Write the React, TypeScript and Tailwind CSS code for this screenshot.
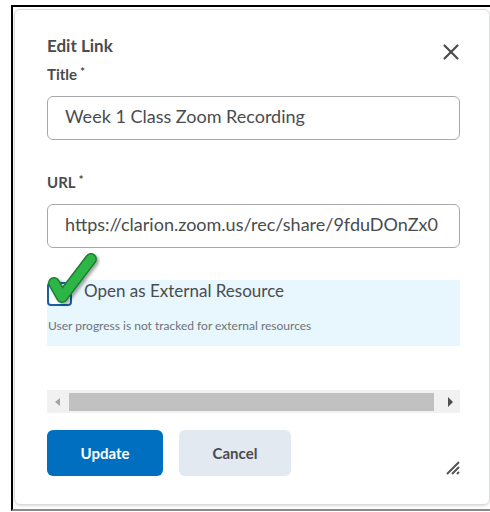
import { X } from 'lucide-react';

const font = { fontFamily: 'Lato, "Open Sans", sans-serif' };

// big green tick drawn over the checkbox
const GreenTick = () => (
  <svg
    className="pointer-events-none absolute left-[-3px] top-[-31px]"
    width="56"
    height="58"
    viewBox="0 0 56 58"
  >
    <defs>
      <filter id="tickShadow" x="-30%" y="-30%" width="160%" height="160%">
        <feDropShadow dx="2" dy="2" stdDeviation="1.5" floodColor="#000" floodOpacity="0.35" />
      </filter>
    </defs>
    <path
      d="M10 32 L18 46 L47 8"
      fill="none"
      stroke="#1b7f30"
      strokeWidth="12"
      strokeLinecap="round"
      strokeLinejoin="round"
      filter="url(#tickShadow)"
    />
    <path
      d="M10 32 L18 46 L47 8"
      fill="none"
      stroke="#2eb548"
      strokeWidth="9"
      strokeLinecap="round"
      strokeLinejoin="round"
    />
  </svg>
);

const Field = ({ label, value }: { label: string; value: string }) => (
  <div className="flex flex-col">
    <label className="text-[15px] font-bold leading-[18px] text-[#494c4e]">
      {label}
      <span className="ml-[3px] align-top text-[12px] leading-[14px]">*</span>
    </label>
    <div className="mt-[13px] flex h-[44px] items-center overflow-hidden rounded-[6px] border border-[#a5a9ab] bg-white pl-[17px] pb-[4px]">
      <span className="whitespace-nowrap text-[18px] text-[#494c4e]">{value}</span>
    </div>
  </div>
);

export default function App() {
  return (
    <div className="h-[512px] w-[490px] bg-white pl-[11px] pt-[5px]" style={font}>
      <div className="h-[506px] border-b-2 border-l-2 border-t-2 border-b-[#8a8a8a] border-l-black border-t-black pl-[1px] pt-[2px]">
        <div className="flex h-[496px] flex-col rounded-[6px] border border-[#d9dbdc] pl-[32px] pr-[29px] shadow-[0_1px_3px_rgba(0,0,0,0.15)]">
          <div className="flex h-[20px] items-start justify-between pt-0 mt-[26px]">
            <h2 className="text-[17px] font-bold leading-[20px] text-[#494c4e]">Edit Link</h2>
            <button className="-mr-[4px] mt-[3px] flex h-[26px] text-[#494c4e]">
              <X size={26} strokeWidth={2} />
            </button>
          </div>

          <div className="mt-[9px]">
            <Field label="Title" value="Week 1 Class Zoom Recording" />
          </div>
          <div className="mt-[33px]">
            <Field label="URL" value="https://clarion.zoom.us/rec/share/9fduDOnZx0" />
          </div>

          <div className="mt-[32px] h-[66px] bg-[#e8f6fe] pt-[2px]">
            <div className="relative flex items-start">
              <GreenTick />
              <span className="h-[24px] w-[25px] rounded-[4px] border-2 border-[#1a5fa3] bg-white" />
              <span className="-mt-[1px] ml-[12px] text-[17px] leading-[20px] text-[#494c4e]">
                Open as External Resource
              </span>
            </div>
            <p className="mt-[11px] pl-[1px] text-[12px] leading-[18px] text-[#6e7376]">
              User progress is not tracked for external resources
            </p>
          </div>

          {/* horizontal scroll bar */}
          <div className="mt-[44px] flex h-[23px] items-center bg-[#f1f1f1]">
            <span className="ml-[8px] h-0 w-0 border-y-[4px] border-r-[5px] border-y-transparent border-r-[#a3a3a3]" />
            <span className="ml-[9px] h-[18px] flex-1 bg-[#c1c1c1]" />
            <span className="ml-[14px] mr-[7px] h-0 w-0 border-y-[5px] border-l-[5px] border-y-transparent border-l-[#505050]" />
          </div>

          <div className="mt-[17px] flex items-end">
            <button className="h-[46px] w-[116px] rounded-[6px] bg-[#006fbf] text-[15px] font-bold text-white">
              Update
            </button>
            <button className="ml-[16px] h-[46px] w-[112px] rounded-[6px] bg-[#e3e9f1] text-[15px] font-bold text-[#494c4e]">
              Cancel
            </button>
            <svg className="mb-[1px] ml-auto" width="14" height="14" viewBox="0 0 14 14">
              <path d="M1 13 L13 1 M6 13 L13 6 M11 13 L13 11" stroke="#555" strokeWidth="2" />
            </svg>
          </div>
        </div>
      </div>
    </div>
  );
}
